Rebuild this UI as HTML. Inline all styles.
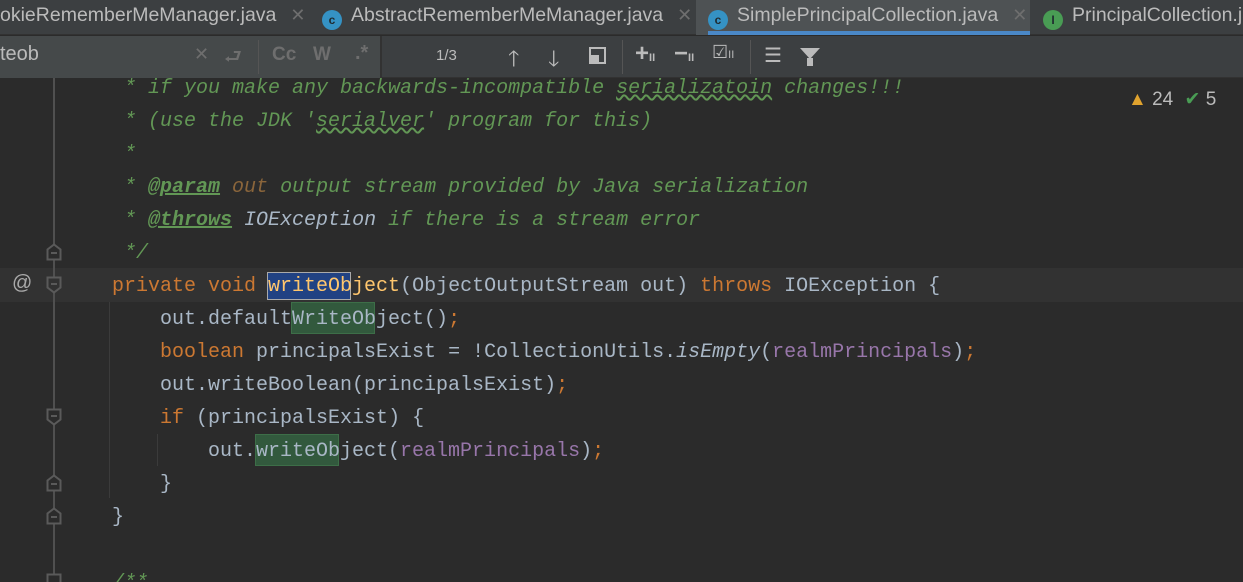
<!DOCTYPE html>
<html><head><meta charset="utf-8"><style>
*{margin:0;padding:0;box-sizing:border-box}
html,body{width:1243px;height:582px;overflow:hidden}
body{background:#2b2b2b;position:relative;font-family:"Liberation Sans",sans-serif}
.tabs{position:absolute;left:0;top:0;width:1243px;height:35px;background:#3c3f41;border-bottom:1px solid #323232}
.tab{position:absolute;top:0;height:35px;color:#bbbbbb;font-size:19.5px;line-height:31px;white-space:nowrap}
.x{color:#6e6e6e;margin-left:14px;font-size:18px}
.ic{display:inline-block;width:20px;height:20px;border-radius:50%;color:#1f2a2f;font-size:12px;line-height:20px;text-align:center;vertical-align:-3px;margin-right:9px;font-weight:bold}
.search{position:absolute;left:0;top:36px;width:1243px;height:42px;background:#3c3f41;border-bottom:1px solid #323232}
.code{position:absolute;left:0;font-family:"Liberation Mono",monospace;font-size:20px;height:33px;line-height:33px;white-space:pre;color:#a9b7c6}
.c{color:#629755;font-style:italic}
.k{color:#cc7832}
.p{color:#9876aa}
.tg{color:#629755;font-weight:bold;font-style:italic;text-decoration:underline}
.fd{position:absolute;left:46px}
</style></head><body>
<div class="tabs">
 <div class="tab" style="left:0">okieRememberMeManager.java<span class="x">✕</span></div>
 <div class="tab" style="left:322px"><span class="ic" style="background:#3592c4">c</span>AbstractRememberMeManager.java<span class="x">✕</span></div>
 <div class="tab" style="left:696px;width:334px;background:#4e5254;padding-left:12px"><span class="ic" style="background:#3592c4">c</span>SimplePrincipalCollection.java<span class="x">✕</span><div style="position:absolute;left:12px;right:0;bottom:0;height:4px;background:#4a88c7"></div></div>
 <div class="tab" style="left:1043px"><span class="ic" style="background:#499c54">I</span>PrincipalCollection.ja</div>
</div>
<div class="search">
 <div style="position:absolute;left:0;top:0;width:380px;height:42px;background:#45494a"></div>
 <div style="position:absolute;left:0;top:7px;color:#bbb;font-size:20px">teob</div>
 <div style="position:absolute;left:194px;top:8px;color:#6e6e6e;font-size:18px">✕</div>
 <div style="position:absolute;left:224px;top:6px;color:#6e6e6e;font-size:20px">⮐</div>
 <div style="position:absolute;left:258px;top:4px;width:1px;height:34px;background:#555"></div>
 <div style="position:absolute;left:272px;top:8px;color:#6e6e6e;font-size:19px;font-weight:bold">Cc</div>
 <div style="position:absolute;left:313px;top:8px;color:#6e6e6e;font-size:19px;font-weight:bold">W</div>
 <div style="position:absolute;left:355px;top:6px;color:#6e6e6e;font-size:20px;font-weight:bold">.*</div>
 <div style="position:absolute;left:380px;top:0;width:2px;height:42px;background:#323232"></div>
 <div style="position:absolute;left:436px;top:11px;color:#bbb;font-size:15px">1/3</div>
 <div style="position:absolute;left:508px;top:6px;color:#bbb;font-size:22px">🡑</div>
 <div style="position:absolute;left:548px;top:6px;color:#bbb;font-size:22px">🡓</div>
 <div style="position:absolute;left:589px;top:11px;width:17px;height:17px;border:2px solid #bbb"><div style="position:absolute;left:0;bottom:0;width:8px;height:7px;background:#bbb"></div></div>
 <div style="position:absolute;left:622px;top:4px;width:1px;height:34px;background:#555"></div>
 <div style="position:absolute;left:635px;top:4px;color:#bbb;font-size:24px;font-weight:bold">+<span style="font-size:11px">II</span></div>
 <div style="position:absolute;left:674px;top:4px;color:#bbb;font-size:24px;font-weight:bold">−<span style="font-size:11px">II</span></div>
 <div style="position:absolute;left:712px;top:6px;color:#bbb;font-size:18px">☑<span style="font-size:11px">II</span></div>
 <div style="position:absolute;left:750px;top:4px;width:1px;height:34px;background:#555"></div>
 <div style="position:absolute;left:764px;top:7px;color:#bbb;font-size:20px">☰</div>
 <div style="position:absolute;left:800px;top:12px;width:0;height:0;border-left:10px solid transparent;border-right:10px solid transparent;border-top:11px solid #bbb"></div>
 <div style="position:absolute;left:807px;top:22px;width:6px;height:8px;background:#bbb"></div>
</div>
<div style="position:absolute;left:0;top:268px;width:1243px;height:34px;background:#323232"></div>
<div style="position:absolute;left:53px;top:78px;width:2px;height:504px;background:#505050"></div>
<div style="position:absolute;left:109px;top:302px;width:1px;height:196px;background:#3b3b3b"></div>
<div style="position:absolute;left:157px;top:434px;width:1px;height:32px;background:#3b3b3b"></div>
<div style="position:absolute;left:12px;top:272px;color:#aaa;font-size:20px">@</div>
<svg class="fd" style="top:243px" width="16" height="18"><path d="M1.5 16.5V6.5L8 1.5L14.5 6.5V16.5Z" fill="#2b2b2b" stroke="#5a5a5a" stroke-width="2"/><path d="M5 10H11" stroke="#5a5a5a" stroke-width="2"/></svg>
<svg class="fd" style="top:276px" width="16" height="18"><path d="M1.5 1.5V11.5L8 16.5L14.5 11.5V1.5Z" fill="#323232" stroke="#5a5a5a" stroke-width="2"/><path d="M5 8H11" stroke="#5a5a5a" stroke-width="2"/></svg>
<svg class="fd" style="top:408px" width="16" height="18"><path d="M1.5 1.5V11.5L8 16.5L14.5 11.5V1.5Z" fill="#2b2b2b" stroke="#5a5a5a" stroke-width="2"/><path d="M5 8H11" stroke="#5a5a5a" stroke-width="2"/></svg>
<svg class="fd" style="top:474px" width="16" height="18"><path d="M1.5 16.5V6.5L8 1.5L14.5 6.5V16.5Z" fill="#2b2b2b" stroke="#5a5a5a" stroke-width="2"/><path d="M5 10H11" stroke="#5a5a5a" stroke-width="2"/></svg>
<svg class="fd" style="top:507px" width="16" height="18"><path d="M1.5 16.5V6.5L8 1.5L14.5 6.5V16.5Z" fill="#2b2b2b" stroke="#5a5a5a" stroke-width="2"/><path d="M5 10H11" stroke="#5a5a5a" stroke-width="2"/></svg>
<svg class="fd" style="top:573px" width="16" height="18"><path d="M1.5 1.5V11.5L8 16.5L14.5 11.5V1.5Z" fill="#2b2b2b" stroke="#5a5a5a" stroke-width="2"/></svg>
<div style="position:absolute;left:267px;top:272px;width:84px;height:28px;background:#214283;border:1px solid #aaa"></div>
<div style="position:absolute;left:291px;top:302px;width:84px;height:32px;background:#32593d;border:1px solid #3d6e48"></div>
<div style="position:absolute;left:255px;top:434px;width:84px;height:32px;background:#32593d;border:1px solid #3d6e48"></div>

<div class="code" style="top:72px;left:112px"><span class="c"> * if you make any backwards-incompatible <span style="text-decoration:underline wavy #629755">serializatoin</span> changes!!!</span></div>
<div class="code" style="top:105px;left:112px"><span class="c"> * (use the JDK '<span style="text-decoration:underline wavy #629755">serialver</span>' program for this)</span></div>
<div class="code" style="top:138px;left:112px"><span class="c"> *</span></div>
<div class="code" style="top:171px;left:112px"><span class="c"> * <span class="tg">@param</span> <span style="color:#8a653b">out</span> output stream provided by Java serialization</span></div>
<div class="code" style="top:204px;left:112px"><span class="c"> * <span class="tg">@throws</span> <span style="color:#a9b7c6">IOException</span> if there is a stream error</span></div>
<div class="code" style="top:237px;left:112px"><span class="c"> */</span></div>
<div class="code" style="top:270px;left:112px"><span class="k">private void </span><span style="color:#ffc66d">writeObject</span>(ObjectOutputStream out) <span class="k">throws </span>IOException {</div>
<div class="code" style="top:303px;left:112px">    out.defaultWriteObject()<span class="k">;</span></div>
<div class="code" style="top:336px;left:112px">    <span class="k">boolean </span>principalsExist = !CollectionUtils.<i>isEmpty</i>(<span class="p">realmPrincipals</span>)<span class="k">;</span></div>
<div class="code" style="top:369px;left:112px">    out.writeBoolean(principalsExist)<span class="k">;</span></div>
<div class="code" style="top:402px;left:112px">    <span class="k">if </span>(principalsExist) {</div>
<div class="code" style="top:435px;left:112px">        out.writeObject(<span class="p">realmPrincipals</span>)<span class="k">;</span></div>
<div class="code" style="top:468px;left:112px">    }</div>
<div class="code" style="top:501px;left:112px">}</div>
<div class="code" style="top:567px;left:112px"><span class="c">/**</span></div>

<div style="position:absolute;left:1128px;top:88px;color:#bbb;font-size:19px"><span style="color:#e0a32e">▲</span> 24 <span style="color:#499c54;margin-left:6px">✔</span> 5</div>
</body></html>
